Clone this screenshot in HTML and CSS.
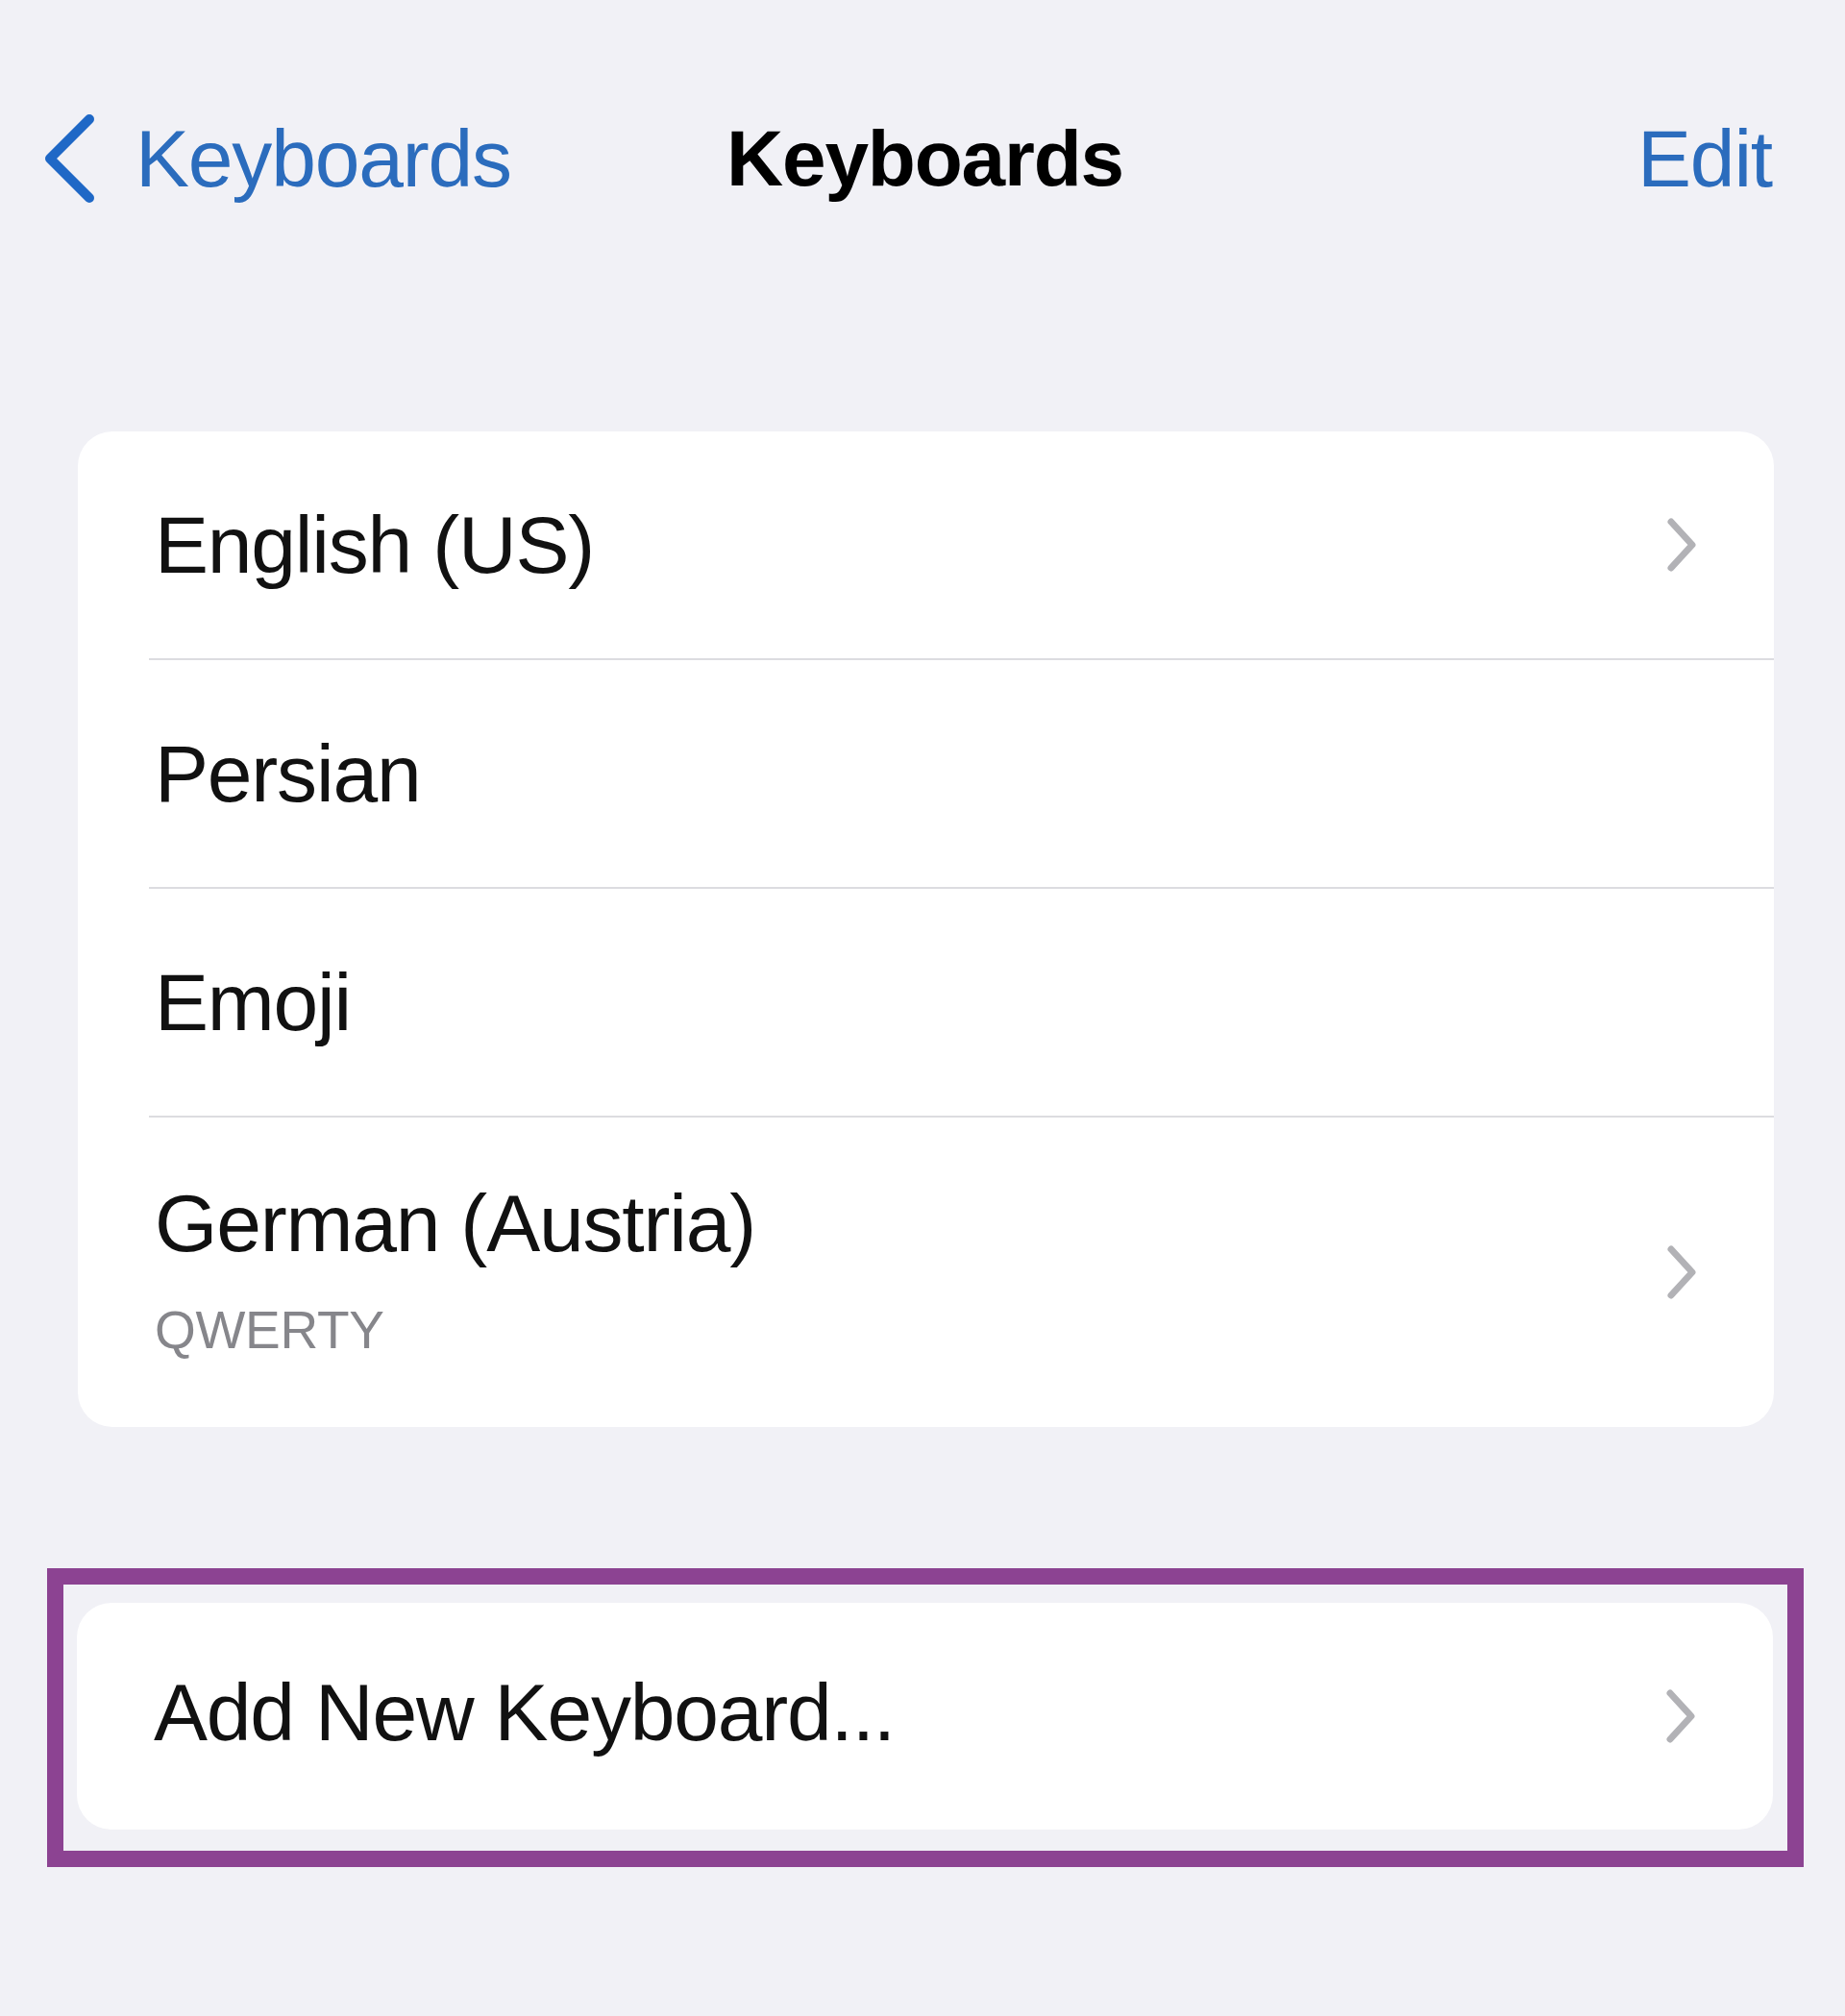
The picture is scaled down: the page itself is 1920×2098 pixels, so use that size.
FILE: index.html
```html
<!DOCTYPE html>
<html lang="en">
<head>
<meta charset="utf-8">
<title>Keyboards</title>
<link rel="stylesheet" href="styles.css">
</head>
<body>
<div class="screen">
  <header class="nav">
    <a class="nav-back">
      <svg class="back-icon" viewBox="0 0 60 100" width="60" height="100" aria-hidden="true">
        <path d="M52 9 L11 50 L52 91" fill="none" stroke="#1f68c6" stroke-width="10" stroke-linecap="round" stroke-linejoin="round"/>
      </svg>
      <span class="nav-back-label">Keyboards</span>
    </a>
    <h1 class="nav-title">Keyboards</h1>
    <a class="nav-edit">Edit</a>
  </header>

  <section class="group group-list">
    <div class="row">
      <div class="row-body">
        <span class="row-title">English (US)</span>
        <svg class="chev" viewBox="0 0 36 60" width="36" height="60" aria-hidden="true"><path d="M7 6 L29 30 L7 54" fill="none" stroke="#b2b2b6" stroke-width="7" stroke-linecap="round" stroke-linejoin="round"/></svg>
      </div>
    </div>
    <div class="row">
      <div class="row-body">
        <span class="row-title">Persian</span>
      </div>
    </div>
    <div class="row">
      <div class="row-body">
        <span class="row-title">Emoji</span>
      </div>
    </div>
    <div class="row row-tall">
      <div class="row-body row-last">
        <div class="row-text">
          <span class="row-title">German (Austria)</span>
          <span class="row-sub">QWERTY</span>
        </div>
        <svg class="chev" viewBox="0 0 36 60" width="36" height="60" aria-hidden="true"><path d="M7 6 L29 30 L7 54" fill="none" stroke="#b2b2b6" stroke-width="7" stroke-linecap="round" stroke-linejoin="round"/></svg>
      </div>
    </div>
  </section>

  <div class="highlight">
    <section class="group">
      <div class="row">
        <div class="row-body row-last">
          <span class="row-title">Add New Keyboard...</span>
          <svg class="chev" viewBox="0 0 36 60" width="36" height="60" aria-hidden="true"><path d="M7 6 L29 30 L7 54" fill="none" stroke="#b2b2b6" stroke-width="7" stroke-linecap="round" stroke-linejoin="round"/></svg>
        </div>
      </div>
    </section>
  </div>
</div>
</body>
</html>
```

FILE: styles.css
```css
html, body {
  margin: 0;
  padding: 0;
  background: #f1f1f6;
}

body {
  font-family: "Liberation Sans", Arial, sans-serif;
  color: #111;
}

.screen {
  min-height: 2098px;
  box-sizing: border-box;
  padding-top: 115px;
}

/* Navigation bar */
.nav {
  display: grid;
  grid-template-columns: 1fr auto 1fr;
  align-items: center;
  padding: 0 76px 0 41px;
  height: 84px;
}

.nav-back {
  display: flex;
  align-items: center;
  gap: 40px;
  color: #2b6cbd;
  font-size: 84px;
  line-height: 84px;
  letter-spacing: -1.2px;
  justify-self: start;
}

.back-icon {
  display: block;
  flex: none;
}

.nav-title {
  margin: 0;
  font-size: 82px;
  line-height: 84px;
  font-weight: 700;
  letter-spacing: -1.2px;
  color: #000;
  transform: translateX(20px);
}

.nav-edit {
  justify-self: end;
  color: #2b6cbd;
  font-size: 84px;
  line-height: 84px;
  letter-spacing: -1.2px;
}

/* Grouped list */
.group {
  background: #fff;
  border-radius: 36px;
  overflow: hidden;
}

.group-list {
  margin: 250px 74px 0 81px;
}

.row {
  padding-left: 74px;
}

.row-body {
  display: flex;
  align-items: center;
  justify-content: space-between;
  height: 236px;
  padding: 0 78px 0 6px;
  border-bottom: 2px solid #dcdce0;
}

.row-last {
  border-bottom: none;
  height: 236px;
}

.row-tall .row-body {
  height: 322px;
}

.row-title {
  font-size: 84px;
  line-height: 84px;
  letter-spacing: -1.2px;
  color: #111;
}

.row-text {
  display: flex;
  flex-direction: column;
  margin-top: -6px;
}

.row-sub {
  margin-top: 42px;
  font-size: 55px;
  line-height: 55px;
  letter-spacing: -0.3px;
  color: #86868b;
}

.chev {
  display: block;
  flex: none;
}

/* Purple highlight around the "Add New Keyboard" group */
.highlight {
  margin: 147px 43px 0 49px;
  border: 17px solid #8c4392;
  padding: 19px 15px 22px 14px;
}

.highlight .row-title {
  position: relative;
  top: -4px;
}
```
